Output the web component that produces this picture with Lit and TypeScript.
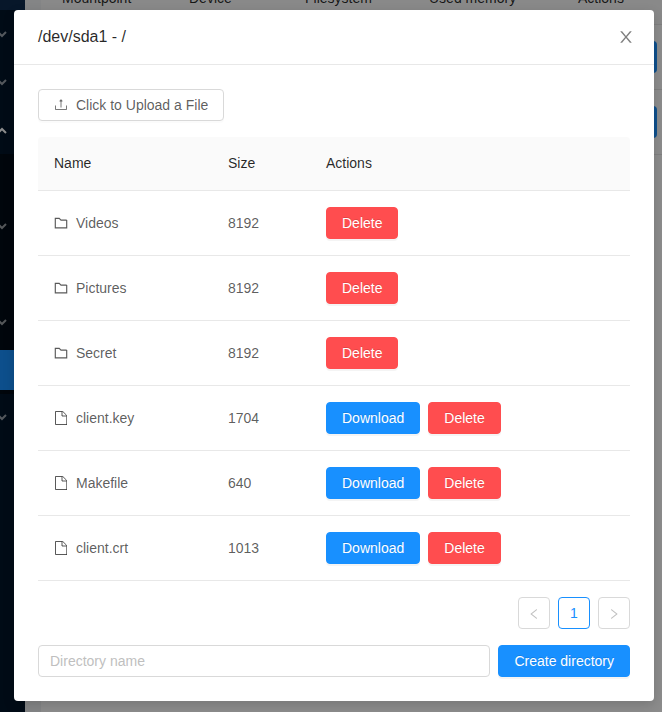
import { LitElement, html, css, svg } from "lit";
import { customElement, property } from "lit/decorators.js";

const LINE_ICONS: Record<string, unknown> = {
  upload: svg`<g opacity="0.8"><path d="M1.5 8.5v4h11v-4"></path><path d="M7 3.5v7"></path><path d="M5.6 4.2L7 2.4l1.4 1.8z" fill="currentColor" stroke-width="0.5"></path></g>`,
  folder: svg`<path d="M12.7 4v7.8H1.3V2.4h3.9L7 4.1h5.7z" stroke-width="1.15"></path>`,
  file: svg`<path d="M12.5 4.2v9.3" opacity="0.75"></path><path d="M13 13.5H1.5V.5h7.3l3.7 3.7M8 .8V5h4.5"></path>`,
};

const ICONS: Record<string, string> = {
  close: "M563.8 512l262.5-312.9c4.4-5.2.7-13.1-6.1-13.1h-79.8c-4.7 0-9.2 2.1-12.3 5.7L511.6 449.8 295.1 191.7c-3-3.6-7.5-5.7-12.3-5.7H203c-6.8 0-10.5 7.9-6.1 13.1L459.4 512 196.9 824.9A7.95 7.95 0 0 0 203 838h79.8c4.7 0 9.2-2.1 12.3-5.7l216.5-258.1 216.5 258.1c3 3.6 7.5 5.7 12.3 5.7h79.8c6.8 0 10.5-7.9 6.1-13.1L563.8 512z",
  left: "M724 218.3V141c0-6.7-7.7-10.4-12.9-6.3L260.3 486.8a31.86 31.86 0 0 0 0 50.3l450.8 352.1c5.3 4.1 12.9.4 12.9-6.3v-77.3c0-4.9-2.3-9.6-6.1-12.6l-360-281 360-281.1c3.8-3 6.1-7.7 6.1-12.6z",
  right: "M765.7 486.8L314.9 134.7A7.97 7.97 0 0 0 302 141v77.3c0 4.9 2.3 9.6 6.1 12.6l360 281.1-360 281.1c-3.9 3-6.1 7.7-6.1 12.6V883c0 6.7 7.7 10.4 12.9 6.3l450.8-352.1a31.96 31.96 0 0 0 0-50.4z",
};

@customElement("ui-icon")
class UiIcon extends LitElement {
  @property() name = "";
  static styles = css`
    :host { display: inline-flex; flex: none; width: 1em; height: 1em; }
    svg { display: block; width: 100%; height: 100%; }
    .solid { fill: currentColor; }
    .line { fill: none; stroke: currentColor; stroke-width: 1; }
  `;
  render() {
    const line = LINE_ICONS[this.name];
    return line
      ? html`<svg class="line" viewBox="0 0 14 14">${line}</svg>`
      : html`<svg class="solid" viewBox="64 64 896 896">${svg`<path d=${ICONS[this.name]}></path>`}</svg>`;
  }
}

@customElement("ui-button")
class UiButton extends LitElement {
  @property({ reflect: true }) kind = "default";
  static styles = css`
    :host { display: inline-flex; flex: none; }
    button {
      display: inline-flex; align-items: center; gap: 8px; height: 32px; box-sizing: border-box;
      padding: 0 15px; border: 1px solid #d9d9d9; border-radius: 4px; background: #fff;
      font: 14px/21px "Liberation Sans", Arial, sans-serif; color: rgba(0, 0, 0, 0.65);
      white-space: nowrap; box-shadow: 0 2px 0 rgba(0, 0, 0, 0.015);
    }
    :host([kind="primary"]) button, :host([kind="danger"]) button {
      color: #fff; text-shadow: 0 -1px 0 rgba(0, 0, 0, 0.12); box-shadow: 0 2px 0 rgba(0, 0, 0, 0.045);
    }
    :host([kind="primary"]) button { background: #1890ff; border-color: #1890ff; }
    :host([kind="danger"]) button { background: #ff4d4f; border-color: #ff4d4f; }
  `;
  render() {
    return html`<button><slot></slot></button>`;
  }
}

interface Entry { name: string; size: number; kind: "folder" | "file"; }

const ENTRIES: Entry[] = [
  { name: "Videos", size: 8192, kind: "folder" },
  { name: "Pictures", size: 8192, kind: "folder" },
  { name: "Secret", size: 8192, kind: "folder" },
  { name: "client.key", size: 1704, kind: "file" },
  { name: "Makefile", size: 640, kind: "file" },
  { name: "client.crt", size: 1013, kind: "file" },
];

const chevron = (up = false) => html`
  <svg class="chevron ${up ? "up" : ""}" viewBox="0 0 10 7"><path d="M1 1l4 4 4-4"></path></svg>`;

@customElement("app-root")
class AppRoot extends LitElement {
  static styles = css`
    :host {
      display: block; position: relative; height: 712px; overflow: hidden;
      font: 14px/21px "Liberation Sans", Arial, sans-serif; color: rgba(0, 0, 0, 0.65);
    }
    .page { display: flex; height: 100%; background: #f0f2f5; }
    .sider { flex: none; width: 25px; background: #001529; }
    .logo { height: 10px; background: #0e2b4e; }
    .item, .sub-item { display: flex; align-items: center; height: 48px; }
    .submenu { background: #000c17; height: 240px; box-sizing: border-box; padding-top: 48px; }
    .sub-item.active { height: 40px; margin-top: 4px; background: #1890ff; }
    .item.last { height: 47px; }
    .chevron {
      width: 10px; height: 7px; margin-left: -3px; fill: none; stroke: #fff;
      stroke-width: 2; opacity: 0.6;
    }
    .chevron.up { transform: rotate(180deg); opacity: 1; }
    .content { flex: 1; min-width: 0; padding-left: 16px; }
    .card { display: flow-root; height: 100%; background: #fff; }
    .disks { margin-top: -30px; }
    .disk-head, .disk-row { display: flex; box-sizing: border-box; border-bottom: 1px solid #e8e8e8; }
    .disk-head {
      height: 55px; padding: 18px 0 0 21px; background: #fafafa; color: rgba(0, 0, 0, 0.85);
    }
    .disk-head span:nth-child(1) { width: 127px; }
    .disk-head span:nth-child(2) { width: 116px; }
    .disk-head span:nth-child(3) { width: 124px; }
    .disk-head span:nth-child(4) { width: 149px; }
    .disk-row { height: 65px; align-items: center; justify-content: flex-end; padding-right: 5px; }
    .disk-action { width: 79px; height: 32px; border-radius: 4px; background: #1890ff; }

    .mask {
      position: absolute; inset: 0; box-sizing: border-box; padding: 10px 8px 11px 14px;
      background: rgba(0, 0, 0, 0.45);
    }
    .modal {
      width: 640px; height: 691px; border-radius: 4px; background: #fff;
      box-shadow: 0 4px 12px rgba(0, 0, 0, 0.15);
    }
    .title {
      display: flex; align-items: center; justify-content: space-between; height: 55px;
      box-sizing: border-box; padding: 0 20px 0 24px; border-bottom: 1px solid #e8e8e8;
      font-size: 16px; line-height: 22px; color: rgba(0, 0, 0, 0.85);
    }
    .close { color: rgba(0, 0, 0, 0.5); }
    .body { padding: 24px; }
    .upload-icon { margin-bottom: 2px; }
    .table { margin-top: 16px; }
    .row {
      display: grid; grid-template-columns: 174px 98px 1fr; align-items: center; height: 65px;
      box-sizing: border-box; border-bottom: 1px solid #e8e8e8;
    }
    .row > * { padding-left: 16px; }
    .row.head {
      height: 54px; background: #fafafa; border-radius: 4px 4px 0 0; color: rgba(0, 0, 0, 0.85);
    }
    .name, .actions { display: flex; align-items: center; gap: 8px; }
    .pager { display: flex; justify-content: flex-end; gap: 8px; margin: 16px 0; }
    .page-box {
      display: flex; align-items: center; justify-content: center; width: 32px; height: 32px;
      box-sizing: border-box; border: 1px solid #d9d9d9; border-radius: 4px; color: rgba(0, 0, 0, 0.25);
    }
    .page-box ui-icon { font-size: 12px; margin-top: 2px; }
    .page-box.current { border-color: #1890ff; color: #1890ff; }
    .create { display: flex; gap: 8px; }
    .create input {
      flex: 1; min-width: 0; height: 32px; box-sizing: border-box; padding: 4px 11px;
      border: 1px solid #d9d9d9; border-radius: 4px; background: #fff; font: inherit; color: inherit;
    }
    .create input::placeholder { color: #bfbfbf; }
  `;

  renderRow(e: Entry) {
    return html`
      <div class="row">
        <div class="name"><ui-icon name=${e.kind}></ui-icon><span>${e.name}</span></div>
        <div>${e.size}</div>
        <div class="actions">
          ${e.kind === "file" ? html`<ui-button kind="primary">Download</ui-button>` : null}
          <ui-button kind="danger">Delete</ui-button>
        </div>
      </div>`;
  }

  render() {
    return html`
      <div class="page">
        <div class="sider">
          <div class="logo"></div>
          <div class="item">${chevron()}</div>
          <div class="item">${chevron()}</div>
          <div class="item">${chevron(true)}</div>
          <div class="submenu">
            <div class="sub-item">${chevron()}</div>
            <div class="sub-item"></div>
            <div class="sub-item">${chevron()}</div>
            <div class="sub-item active"></div>
          </div>
          <div class="item last">${chevron()}</div>
        </div>
        <div class="content">
          <div class="card">
            <div class="disks">
              <div class="disk-head">
                <span>Mountpoint</span><span>Device</span><span>Filesystem</span><span>Used memory</span><span>Actions</span>
              </div>
              <div class="disk-row"><div class="disk-action"></div></div>
              <div class="disk-row"><div class="disk-action"></div></div>
            </div>
          </div>
        </div>
      </div>
      <div class="mask">
        <div class="modal">
          <div class="title"><span>/dev/sda1 - /</span><ui-icon class="close" name="close"></ui-icon></div>
          <div class="body">
            <ui-button><ui-icon class="upload-icon" name="upload"></ui-icon>Click to Upload a File</ui-button>
            <div class="table">
              <div class="row head"><span>Name</span><span>Size</span><span>Actions</span></div>
              ${ENTRIES.map((e) => this.renderRow(e))}
            </div>
            <div class="pager">
              <div class="page-box"><ui-icon name="left"></ui-icon></div>
              <div class="page-box current">1</div>
              <div class="page-box"><ui-icon name="right"></ui-icon></div>
            </div>
            <div class="create">
              <input placeholder="Directory name" />
              <ui-button kind="primary">Create directory</ui-button>
            </div>
          </div>
        </div>
      </div>`;
  }
}
